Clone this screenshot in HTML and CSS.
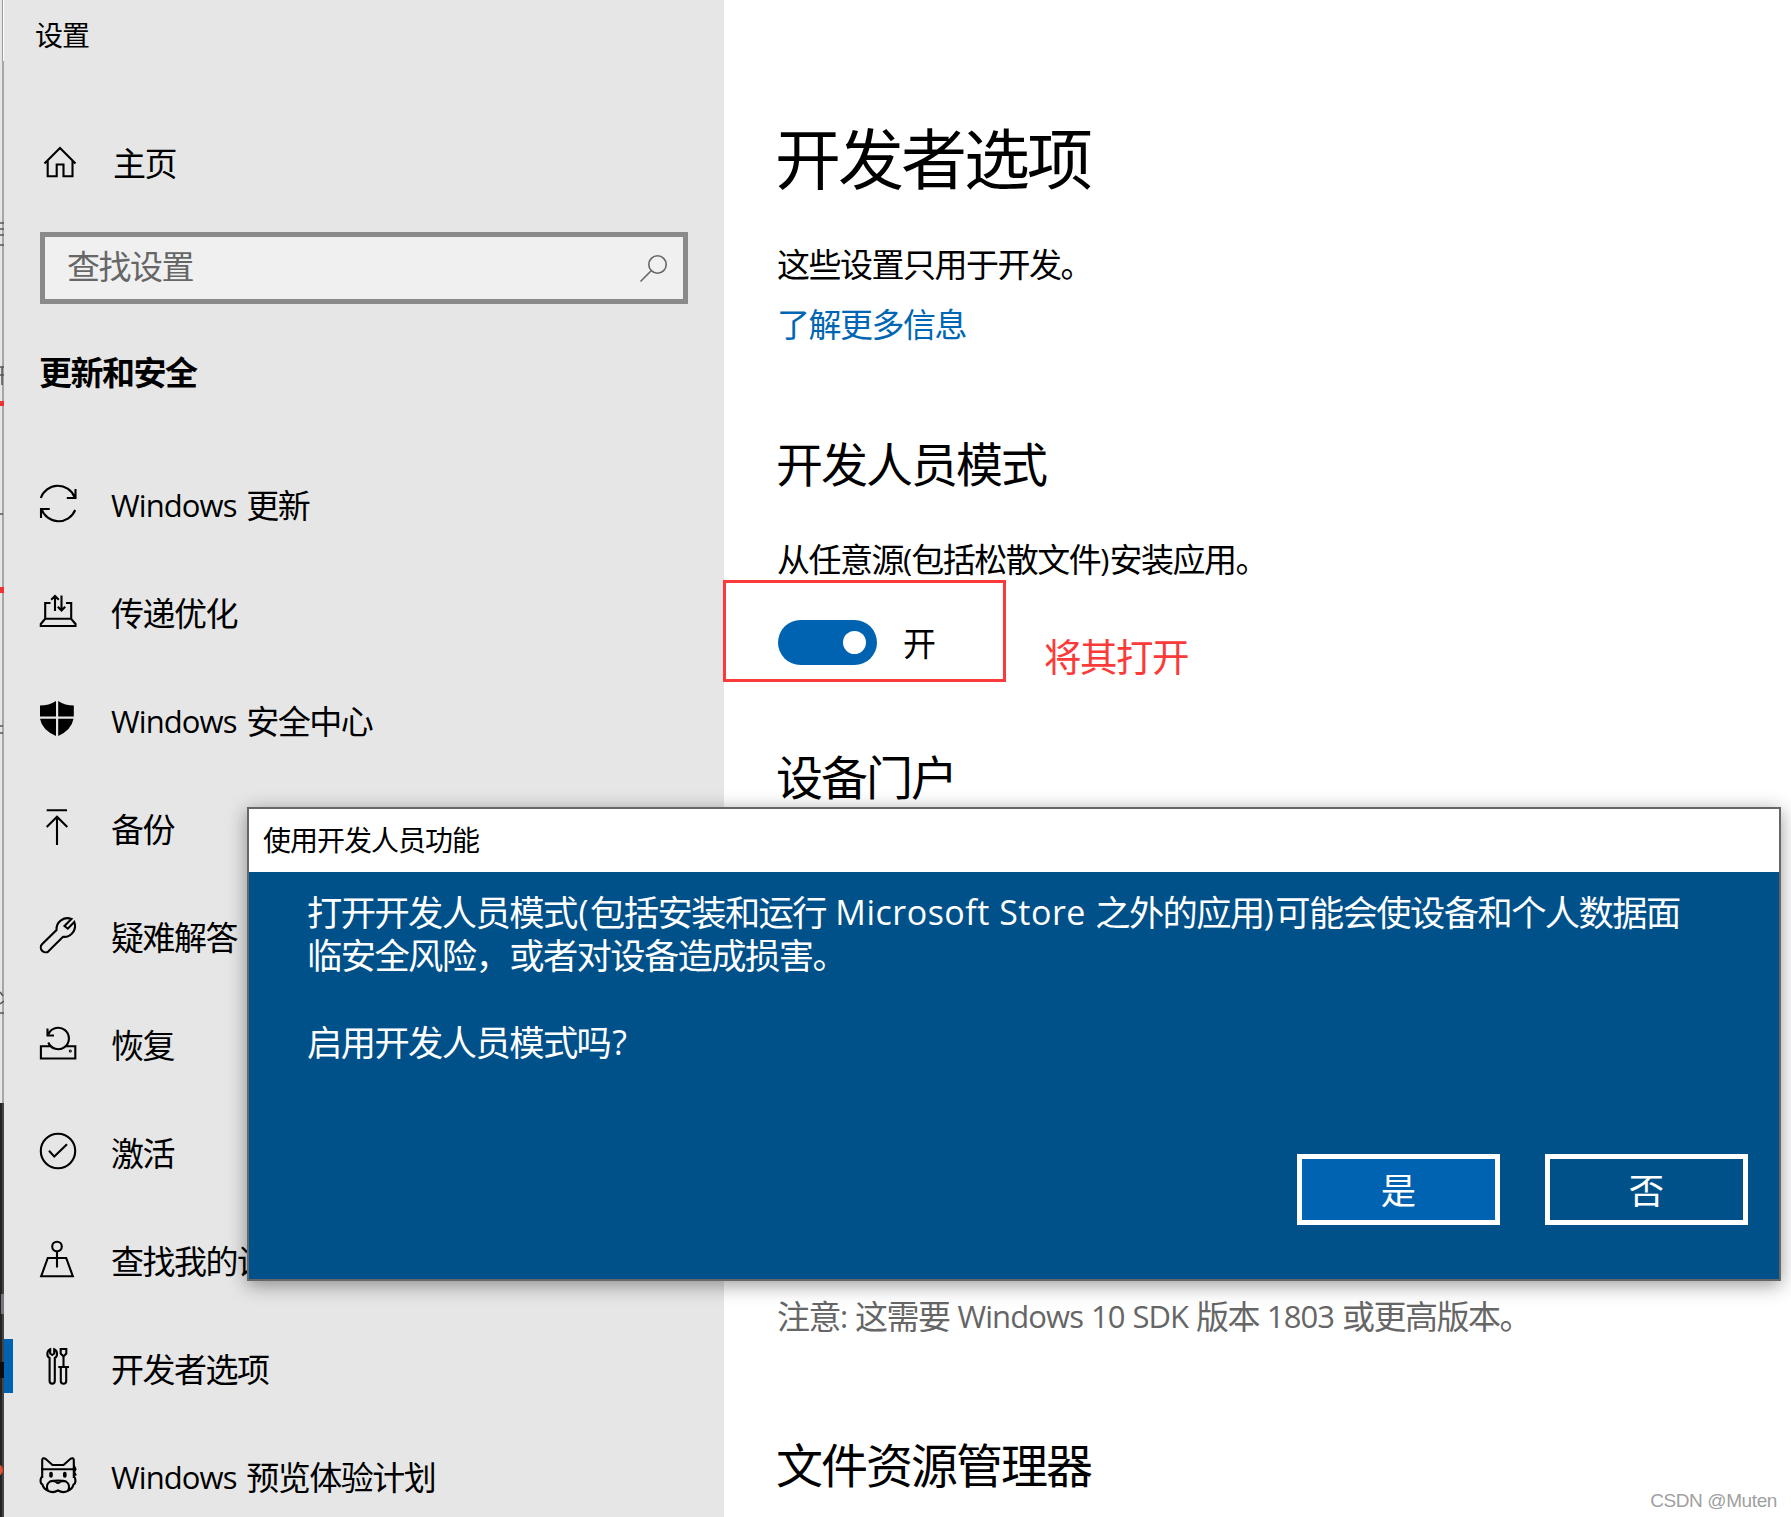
FILE: index.html
```html
<!DOCTYPE html>
<html lang="zh-CN">
<head>
<meta charset="utf-8">
<title>设置</title>
<link rel="stylesheet" href="styles.css">
</head>
<body>
<div class="window">
  <svg class="edge" width="4" height="1517" viewBox="0 0 4 1517">
    <rect width="4" height="1517" fill="#e6e6e6"/>
    <rect x="2" width="1" height="61" fill="#999"/><rect x="3" width="1" height="61" fill="#fff"/>
    <rect x="2" y="61" width="2" height="1042" fill="#a6a6a6"/>
    <path d="M0 223h4M0 229h4M0 235h4M0 245h4M0 367h4M0 375h4M2 367v18M0 514h3M0 726h3M0 733h3M0 992l3 4M0 1004l4-3M0 1013h4" stroke="#555" stroke-width="1.5"/>
    <rect y="401" width="4" height="5" fill="#e33"/><rect y="587" width="4" height="6" fill="#e33"/>
    <rect y="1103" width="2" height="414" fill="#222"/><rect x="2" y="1103" width="2" height="414" fill="#444"/>
    <rect x="1" y="1294" width="3" height="20" fill="#777480"/><rect y="1362" width="4" height="16" fill="#0c0c0c"/>
    <circle cx="-3" cy="1470" r="6" fill="#e2502e"/>
  </svg>

  <aside class="sidebar">
    <div class="app-title">设置</div>
    <div class="home">
      <svg class="icon" viewBox="0 0 44 44"><path d="M8.500 23.500 24 8l15.500 15.500M11.700 21v15.200h9V24.500h6.800v11.700h9V21"/></svg>
      <span>主页</span>
    </div>
    <div class="search">
      <span>查找设置</span>
      <svg width="30" height="30" viewBox="0 0 30 30"><circle cx="18.500" cy="11.500" r="8.700"/><path d="M12.200 17.700 1.500 28.500"/></svg>
    </div>
    <div class="group">更新和安全</div>
    <nav>
      <div class="item">
        <svg class="icon" viewBox="0 0 44 44"><path d="M4.800 16A18 18 0 0 1 38.500 15M39.200 28A18 18 0 0 1 5.500 27M39.500 7v9h-8.700M5 36v-9h8.700"/></svg>
        <span><span class="lat">Windows </span>更新</span>
      </div>
      <div class="item">
        <svg class="icon" viewBox="0 0 44 44"><path d="M14.500 13H9.200v15.800h26V13H30M9.200 28.800 4.800 34v2h34.700v-2l-4.300-5.200M19 21V6M15.200 9.800 19 6l3.800 3.800M25.500 5.500v15M21.800 16.800l3.700 3.700 3.700-3.700"/></svg>
        <span>传递优化</span>
      </div>
      <div class="item">
        <svg class="icon solid" viewBox="0 0 44 44"><path d="M4 7.500Q13 7.500 20 3V18.500H4ZM22.200 3Q29 7.500 37.800 7.500V18.500H22.200ZM4 20.800H20V38Q6 32 4 20.800ZM22.200 20.800H37.500Q35.500 32 22.200 38Z"/></svg>
        <span><span class="lat">Windows </span>安全中心</span>
      </div>
      <div class="item">
        <svg class="icon" viewBox="0 0 44 44"><path d="M10.700 4.200H31M21 39V11M10.700 21 21 10.700 31.300 21"/></svg>
        <span>备份</span>
      </div>
      <div class="item">
        <svg class="icon" viewBox="0 0 44 44"><path d="M35.500 5A11 11 0 0 0 20.500 16L6 30.300A4.800 4.800 0 0 0 12.500 37.300L27 22.800A11 11 0 0 0 38.300 8L31.800 14.700 28.500 12Z"/></svg>
        <span>疑难解答</span>
      </div>
      <div class="item">
        <svg class="icon" viewBox="0 0 44 44"><path d="M12.500 12A10.700 10.700 0 1 1 12.300 20.500M11.500 6.500v7h6.500M14.500 24.200H4.900V36.500H39.300V24.200H29.500"/><circle cx="34.300" cy="29" r=".5"/></svg>
        <span>恢复</span>
      </div>
      <div class="item">
        <svg class="icon" viewBox="0 0 44 44"><circle cx="22" cy="21" r="17.200"/><path d="m13 20.800 5.300 5.800L31 14.300"/></svg>
        <span>激活</span>
      </div>
      <div class="item">
        <svg class="icon" viewBox="0 0 44 44"><circle cx="21" cy="8.500" r="4.800"/><path d="M21 13.300V29.500M21 20H11.800L5.200 38.200H36.800L30.200 20H21"/></svg>
        <span>查找我的设备</span>
      </div>
      <div class="item selected">
        <svg class="icon" viewBox="0 0 44 44"><path d="M14.200 3.300A5 5 0 0 0 13.600 12V35a2.500 2.500 0 0 0 5.200 0V12A5 5 0 0 0 18.200 3.300V7.500L16.200 9 14.200 7.500ZM24.700 3h5.600v4.500L27.500 10.500 24.700 7.500ZM27.500 10.500V21M22.300 21H33M24.800 21V35a2.600 2.600 0 0 0 5.400 0V21"/></svg>
        <span>开发者选项</span>
      </div>
      <div class="item">
        <svg class="icon" viewBox="0 0 44 44"><path d="M6.200 24V6Q6.500 3.200 9.500 4.800L16.500 11H27.500L34.500 4.800Q37.500 3.200 37.800 6V24M5 15.200H39M38 12l1.500 3.200-1.500 2.800 2 3.500M6.200 22Q3.500 26 5.200 29.500L6.500 30.500Q7.500 35 12 36.800M37.800 22Q40.500 26 38.800 29.500L37.500 30.500Q36.500 35 32 36.800M22 29.500Q18.500 25.500 14 27.500Q9 31 12 36.800Q17 39.500 22 36.500Q27 39.500 32 36.800Q35 31 30 27.500Q25.500 25.500 22 29.500M14 27.500Q22 25.500 30 27.500"/><path class="eyes" d="M15 19.500v2.500M28.800 19.500v2.500"/></svg>
        <span><span class="lat">Windows </span>预览体验计划</span>
      </div>
    </nav>
  </aside>

  <main class="content">
    <h1>开发者选项</h1>
    <p class="intro">这些设置只用于开发。</p>
    <a class="more">了解更多信息</a>
    <h2 class="mode">开发人员模式</h2>
    <p class="source">从任意源<span class="lat">(</span>包括松散文件<span class="lat close">)</span>安装应用。</p>
    <div class="switch-row"><span class="switch"></span><span>开</span></div>
    <h2 class="portal">设备门户</h2>
    <p class="note">注意<span class="lat">: </span>这需要<span class="lat"> Windows 10 SDK </span>版本<span class="lat"> 1803 </span>或更高版本。</p>
    <h2 class="explorer">文件资源管理器</h2>
  </main>

  <div class="mark-box"></div>
  <div class="mark-text">将其打开</div>

  <section class="dialog">
    <header>使用开发人员功能</header>
    <div class="dialog-body">
      <p>打开开发人员模式<span class="lat open">(</span>包括安装和运行<span class="lat ms"> Microsoft Store </span>之外的应用<span class="lat close">)</span>可能会使设备和个人数据面<br>临安全风险，或者对设备造成损害。<br><br>启用开发人员模式吗<span class="lat open">?</span></p>
      <div class="actions"><button class="yes">是</button><button>否</button></div>
    </div>
  </section>
  <div class="watermark">CSDN @Muten</div>
</div>
</body>
</html>
```

FILE: styles.css
```css
* { box-sizing: border-box; }
body { margin: 0; background: #fff; }
h1, h2, p { margin: 0; font-weight: 400; }

.window {
  position: relative;
  display: flex;
  width: 1791px;
  height: 1517px;
  overflow: hidden;
  color: #000;
  font: 33px/40px "Noto Sans CJK SC", sans-serif;
  letter-spacing: -1.5px;
  white-space: nowrap;
}
.lat {
  position: relative;
  top: -1px;
  font-family: "Open Sans", sans-serif;
  font-size: 31px;
  line-height: 0;
  letter-spacing: -.9px;
  white-space: pre;
}
.edge { flex: none; }

/* Sidebar */
.sidebar {
  flex: none;
  width: 720px;
  padding-top: 19px;
  background: #e6e6e6;
}
.app-title {
  padding-left: 31px;
  font-size: 28px;
  line-height: 30px;
  letter-spacing: -1px;
}
.home {
  display: flex;
  align-items: center;
  height: 48px;
  margin-top: 89px;
  padding-left: 32px;
  gap: 33px;
}
.search {
  display: flex;
  align-items: center;
  justify-content: space-between;
  width: 648px;
  height: 72px;
  margin: 46px 0 0 36px;
  padding: 0 14px 0 22px;
  border: 5px solid #8a8a8a;
  background: #f0f0f0;
  color: #666;
}
.search svg { fill: none; stroke: #666; stroke-width: 1.6; }
.search span { position: relative; top: -3px; }
.group { margin: 47px 0 0 35px; font-weight: 700; }
nav { margin-top: 59px; }
.item {
  position: relative;
  display: flex;
  align-items: center;
  height: 108px;
  padding-left: 32px;
  gap: 31px;
}
.item .lat { word-spacing: 2.600px; }
.item.selected::before {
  content: "";
  position: absolute;
  left: 0;
  top: 25px;
  width: 9px;
  height: 54px;
  background: #0063b1;
}
.icon {
  flex: none;
  width: 44px;
  height: 44px;
  fill: none;
  stroke: #000;
  stroke-width: 2.1;
}
.icon.solid { fill: #000; stroke: none; }
.eyes { stroke-width: 3.6; stroke-linecap: round; }

/* Content */
.content { flex: 1; padding: 115px 0 0 53px; }
h1 { margin-left: -2px; font-size: 66px; line-height: 80px; letter-spacing: -3px; }
h2 { margin-left: -1px; font-size: 47px; line-height: 60px; letter-spacing: -2px; }
.intro { margin-top: 48px; }
.more { display: block; margin-top: 20px; color: #0066b4; }
.mode { margin-top: 89px; }
.source { margin-top: 46px; }
.source .close { letter-spacing: 0; }
.switch-row {
  display: flex;
  align-items: center;
  height: 45px;
  margin: 42px 0 0 1px;
  gap: 26px;
}
.switch-row span:last-child { position: relative; top: -1px; }
.switch {
  display: flex;
  align-items: center;
  justify-content: flex-end;
  width: 99px;
  height: 45px;
  padding-right: 11px;
  border-radius: 23px;
  background: #0063b1;
}
.switch::after { content: ""; width: 23px; height: 23px; border-radius: 50%; background: #fff; }
.portal { margin-top: 80px; }
.note { margin-top: 490px; color: #666; }
.note .lat { word-spacing: .7px; }
.explorer { margin-top: 98px; }

/* Annotations over the page */
.mark-box {
  position: absolute;
  left: 723px;
  top: 580px;
  width: 283px;
  height: 102px;
  border: 3px solid #fb3a3a;
}
.mark-text {
  position: absolute;
  left: 1044px;
  top: 635px;
  color: #fb3a3a;
  font-size: 37.5px;
  letter-spacing: -1.5px;
}

/* Dialog */
.dialog {
  position: absolute;
  left: 247px;
  top: 807px;
  width: 1534px;
  height: 474px;
  border: 2px solid #666;
  background: #005189;
  box-shadow: 0 4px 18px rgba(0, 0, 0, .4);
}
.dialog header {
  height: 63px;
  padding-left: 14px;
  background: #fff;
  font-size: 28px;
  line-height: 61px;
  letter-spacing: -1px;
}
.dialog-body {
  display: flex;
  flex-direction: column;
  justify-content: space-between;
  height: 407px;
  padding: 17px 31px 54px 58px;
  color: #fff;
}
.dialog p { font-size: 35.300px; line-height: 43.400px; letter-spacing: -1.6px; }
.dialog .lat { font-size: 34px; }
.dialog .open { left: 2px; letter-spacing: 3.500px; }
.dialog .close { letter-spacing: 1.500px; }
.dialog .ms { letter-spacing: .5px; }
.actions { display: flex; justify-content: flex-end; gap: 45px; }
button {
  width: 203px;
  height: 71px;
  padding: 0 0 2px;
  border: 5px solid #fff;
  background: transparent;
  color: #fff;
  font: inherit;
  font-size: 35.300px;
}
button.yes { background: #0063b1; }

.watermark {
  position: absolute;
  right: 14px;
  bottom: 5px;
  color: #a0a0a0;
  font: 19px/22px "Liberation Sans", sans-serif;
  letter-spacing: -.4px;
}
```
